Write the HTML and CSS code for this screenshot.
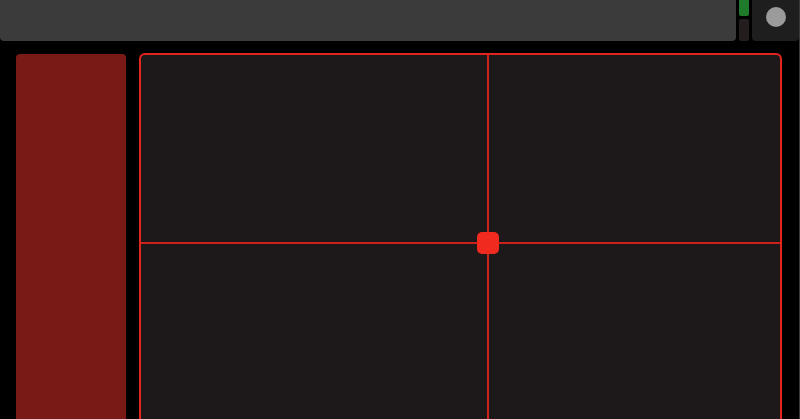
FILE: index.html
```html
<!DOCTYPE html>
<html>
<head>
<meta charset="utf-8">
<link rel="stylesheet" href="styles.css">
</head>
<body>
<div class="app">
  <header class="top">
    <div class="bar"></div>
    <div class="meter">
      <div class="meter-fill"></div>
      <div class="meter-empty"></div>
    </div>
    <div class="knob-box"><div class="knob"></div></div>
  </header>
  <main class="content">
    <aside class="side"></aside>
    <section class="pad">
      <div class="line-v" style="left: 346px"></div>
      <div class="line-h" style="top: 187px"></div>
      <div class="handle" style="left: 336px; top: 177px"></div>
    </section>
  </main>
</div>
</body>
</html>
```
FILE: styles.css
```css
html, body {
  margin: 0;
  padding: 0;
  background: #000;
  overflow: hidden;
}
.app {
  width: 799px;
  height: 419px;
  border-right: 1px solid #3a3a3a;
  display: flex;
  flex-direction: column;
}
.top {
  display: flex;
  height: 41px;
  flex-shrink: 0;
}
.bar {
  flex: 1;
  background: #3b3b3b;
  border-radius: 0 0 4px 4px;
  margin-right: 3px;
}
.meter {
  width: 10px;
  display: flex;
  flex-direction: column;
  gap: 3px;
  margin-right: 3px;
}
.meter-fill {
  height: 16px;
  background: #1f7a2b;
  border-radius: 0 0 2px 2px;
}
.meter-empty {
  flex: 1;
  background: #231d1e;
  border-radius: 2px;
}
.knob-box {
  width: 47px;
  background: #1e1e1e;
  border-radius: 0 0 4px 4px;
  display: flex;
  justify-content: center;
  padding-top: 7px;
  box-sizing: border-box;
}
.knob {
  width: 20px;
  height: 20px;
  border-radius: 50%;
  background: #9b9b9b;
}
.content {
  flex: 1;
  display: flex;
  gap: 13px;
  padding: 12px 17px 0 16px;
  min-height: 0;
}
.side {
  width: 110px;
  margin-top: 1px;
  background: #7a1a17;
  border-radius: 4px 4px 0 0;
}
.pad {
  flex: 1;
  position: relative;
  background: #1d1819;
  border: 2px solid #e3261d;
  border-bottom: none;
  border-radius: 6px 6px 0 0;
  box-sizing: border-box;
}
.line-v {
  position: absolute;
  top: 0;
  bottom: 0;
  width: 2px;
  background: #c9231b;
}
.line-h {
  position: absolute;
  left: 0;
  right: 0;
  height: 2px;
  background: #c9231b;
}
.handle {
  position: absolute;
  width: 22px;
  height: 22px;
  border-radius: 5px;
  background: #f12a1f;
}
```
